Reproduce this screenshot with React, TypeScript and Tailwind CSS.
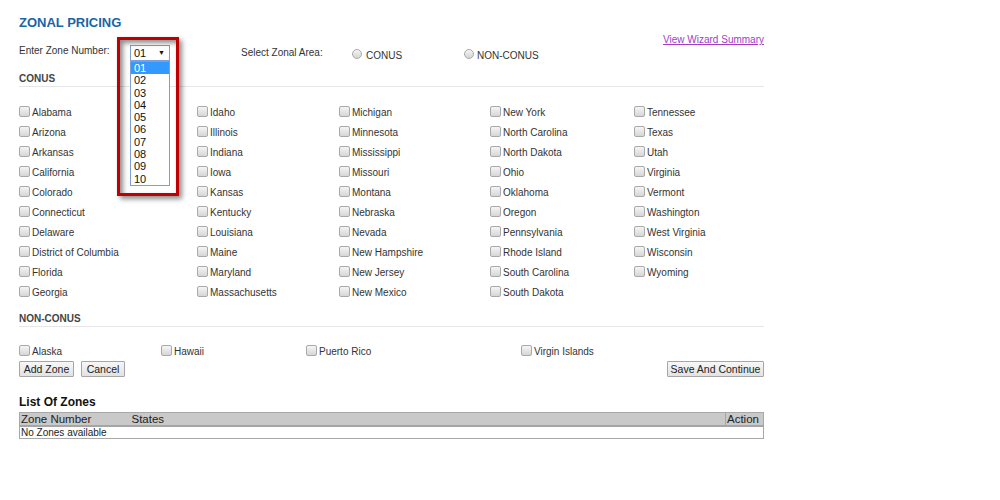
import React from 'react';

const columns: string[][] = [
  ['Alabama', 'Arizona', 'Arkansas', 'California', 'Colorado', 'Connecticut', 'Delaware', 'District of Columbia', 'Florida', 'Georgia'],
  ['Idaho', 'Illinois', 'Indiana', 'Iowa', 'Kansas', 'Kentucky', 'Louisiana', 'Maine', 'Maryland', 'Massachusetts'],
  ['Michigan', 'Minnesota', 'Mississippi', 'Missouri', 'Montana', 'Nebraska', 'Nevada', 'New Hampshire', 'New Jersey', 'New Mexico'],
  ['New York', 'North Carolina', 'North Dakota', 'Ohio', 'Oklahoma', 'Oregon', 'Pennsylvania', 'Rhode Island', 'South Carolina', 'South Dakota'],
  ['Tennessee', 'Texas', 'Utah', 'Virginia', 'Vermont', 'Washington', 'West Virginia', 'Wisconsin', 'Wyoming'],
];

const columnWidths = ['w-[178px]', 'w-[142px]', 'w-[151px]', 'w-[144px]', 'w-[130px]'];

const zones = ['01', '02', '03', '04', '05', '06', '07', '08', '09', '10'];

const CheckBox = () => (
  <span className="inline-block w-[11px] h-[11px] mt-[3px] shrink-0 rounded-[2px] border border-[#a9a9a9] bg-linear-to-b from-[#f5f5f5] to-[#d6d6d6]" />
);

const Radio = () => (
  <span className="inline-block w-[10px] h-[10px] shrink-0 rounded-full border border-[#a9a9a9] bg-linear-to-b from-[#f5f5f5] to-[#d4d4d4]" />
);

const StateItem: React.FC<{ name: string }> = ({ name }) => (
  <div className="flex items-start h-5">
    <CheckBox />
    <span className="ml-[2px] mt-[4px] leading-[12px]">{name}</span>
  </div>
);

const Btn: React.FC<{ label: string; width: string }> = ({ label, width }) => (
  <button
    className={`${width} h-[16px] border border-[#a6a6a6] rounded-[1px] bg-linear-to-b from-[#f7f7f7] to-[#e2e2e2] text-[10.5px] leading-[14px] text-[#222]`}
  >
    {label}
  </button>
);

const App: React.FC = () => {
  return (
    <div className="relative w-[1000px] h-[500px] bg-white text-[#333] text-[10px] font-['Liberation_Sans',Arial,sans-serif]">
      <div className="pl-[19px] w-[764px]">
        <h1 className="pt-[15px] text-[13px] leading-[15px] font-bold text-[#1a65a6]">ZONAL PRICING</h1>

        {/* zone number + area row */}
        <div className="flex items-start h-[40px]">
          <span className="w-[111px] mt-[15px] leading-[12px]">Enter Zone Number:</span>
          <div className="w-[40px] h-[16px] mt-[15px] border border-[#7f9ed6] bg-white flex items-center justify-between pl-[3px] pr-[4px] text-[11px] text-[#111]">
            <span>01</span>
            <span className="text-[7px]">▼</span>
          </div>
          <span className="w-[111px] ml-[71px] mt-[17px] leading-[12px]">Select Zonal Area:</span>
          <div className="w-[112px] mt-[19px] flex items-start">
            <Radio />
            <span className="ml-[4px] leading-[12px] mt-[1px]">CONUS</span>
          </div>
          <div className="mt-[19px] flex items-start">
            <Radio />
            <span className="ml-[3px] leading-[12px] mt-[1px]">NON-CONUS</span>
          </div>
          <a href="#" className="ml-auto mt-[4px] leading-[12px] text-[#a03cc8] underline">View Wizard Summary</a>
        </div>

        <div className="mt-[3px] font-bold text-[#444] leading-[12px] pb-[1px] border-b border-[#e6e6e6]">CONUS</div>

        <div className="flex mt-[16px]">
          {columns.map((col, i) => (
            <div key={i} className={columnWidths[i]}>
              {col.map((s) => (
                <StateItem key={s} name={s} />
              ))}
            </div>
          ))}
        </div>

        <div className="mt-[10px] font-bold text-[#444] leading-[12px] pb-[1px] border-b border-[#e6e6e6]">NON-CONUS</div>

        <div className="flex h-[19px] mt-[15px]">
          <div className="w-[142px]"><StateItem name="Alaska" /></div>
          <div className="w-[145px]"><StateItem name="Hawaii" /></div>
          <div className="w-[215px]"><StateItem name="Puerto Rico" /></div>
          <div><StateItem name="Virgin Islands" /></div>
        </div>

        <div className="flex items-start">
          <Btn label="Add Zone" width="w-[55px]" />
          <span className="w-[7px]" />
          <Btn label="Cancel" width="w-[44px]" />
          <span className="ml-auto" />
          <Btn label="Save And Continue" width="w-[97px]" />
        </div>

        <div className="mt-[18px] text-[12px] leading-[14px] font-bold text-[#111]">List Of Zones</div>

        <table className="mt-[3px] w-full border border-[#a8a8a8] border-collapse">
          <thead>
            <tr className="bg-[#c9c9c9] text-[11.5px] leading-[12px] text-[#222]">
              <th className="text-left font-normal w-[112px] px-[1px] py-0 border-b-2 border-[#a5a5a5]">Zone Number</th>
              <th className="text-left font-normal px-0 py-0 border-b-2 border-[#a5a5a5]">States</th>
              <th className="text-left font-normal w-[38px] px-[1px] py-0 border-l border-b-2 border-[#a5a5a5]">Action</th>
            </tr>
          </thead>
          <tbody>
            <tr className="text-[10px] leading-[11px] text-[#222]">
              <td colSpan={3} className="px-[1px] py-0">No Zones available</td>
            </tr>
          </tbody>
        </table>
      </div>

      {/* open dropdown with annotation frame */}
      <div className="absolute left-[117px] top-[37px] w-[62px] h-[159px] border-[3px] border-[#c00000] shadow-[3px_3px_5px_rgba(0,0,0,0.45),inset_3px_3px_5px_rgba(0,0,0,0.45)]" />
      <div className="absolute left-[130px] top-[61px] w-[40px] h-[125px] border border-[#7f9ed6] bg-white text-[11px] text-[#111]">
        {zones.map((z, i) => (
          <div
            key={z}
            className={`h-[12.3px] leading-[12.3px] pl-[3px] ${i === 0 ? 'bg-[#3399ff] text-white' : ''}`}
          >
            {z}
          </div>
        ))}
      </div>
    </div>
  );
};

export default App;
